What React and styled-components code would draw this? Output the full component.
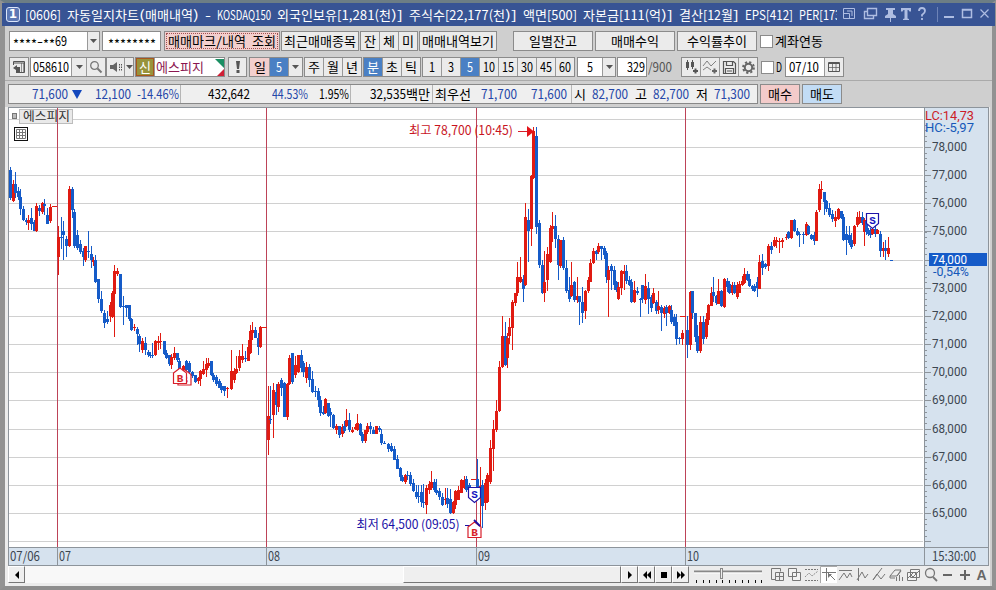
import {useLayoutEffect, useRef} from "react";
import styled, {createGlobalStyle, css} from "styled-components";

const GlobalStyle = createGlobalStyle`
     * {
          box-sizing: border-box;
     }

     body {
          margin: 0;
          overflow: hidden;
          background: #909090;
          font-family: "Liberation Sans Narrow", "Arial Narrow", "Noto Sans CJK KR", sans-serif;
          font-size: 13px;
          line-height: 18px;
          color: #000;
     }
`;

const bevel = css`
     border: 1px solid;
     border-color: #fff #777 #777 #fff;
`;

const S = {
     Window: styled.div`
          width: 996px;
          height: 590px;
          display: flex;
          flex-direction: column;
          background: #cfcfcf;
          border-style: solid;
          border-width: 3px 4px 4px 5px;
          border-color: #6d7e85 #929292 #8e8e8e #929292;
     `,

     TitleBar: styled.div`
          display: flex;
          align-items: center;
          height: 23px;
          margin: 0 -3px;
          padding-left: 4px;
          background: #385494;
          color: #fff;
          flex-shrink: 0;
     `,

     Badge: styled.div`
          width: 14px;
          height: 15px;
          border: 1px solid #dce6fa;
          border-radius: 3px;
          background: #5d78b4;
          font: bold 12px/13px "DejaVu Sans", sans-serif;
          text-align: center;
     `,

     TitleText: styled.div`
          width: 812px;
          margin-left: 5px;
          overflow: hidden;
          white-space: nowrap;
          line-height: 20px;
     `,

     Run: styled.span`
          display: inline-block;
          width: ${({$w}) => $w}px;
          white-space: pre;
          vertical-align: top;
          text-align: left;
     `,

     Glyphs: styled.span`
          display: inline-block;
          transform-origin: 0 50%;
          font-family: ${({$ko}) => ($ko ? '"Noto Sans CJK KR", sans-serif' : "inherit")};
     `,

     Row: styled.div`
          display: flex;
          align-items: center;
          height: 20px;
          margin: ${({$top}) => $top}px 0 0 ${({$left = 4}) => $left}px;
          flex-shrink: 0;
     `,

     Group: styled.div`
          display: flex;
          width: ${({$w}) => $w}px;
          height: 20px;
          margin-left: ${({$gap = 0}) => $gap}px;
          border: 1px solid #8b8b8b;
          background: #f1f1f1;
          flex-shrink: 0;

          > * + * {
               border-left: 1px solid #999;
          }
     `,

     Part: styled.div`
          display: flex;
          align-items: center;
          justify-content: ${({$align = "center"}) => $align};
          width: ${({$w}) => ($w ? `${$w}px` : "auto")};
          flex: ${({$w}) => ($w ? "none" : "1 1 0")};
          padding: 0 ${({$pad = 0}) => $pad}px;
          min-width: 0;
          background: ${({$bg = "#ebebeb"}) => $bg};
          color: ${({$color = "#000"}) => $color};
          outline: ${({$dotted}) => ($dotted ? "1px dotted #a05050" : "none")};
          outline-offset: -2px;
          white-space: nowrap;
     `,

     CreditMark: styled.div`
          display: flex;
          align-items: center;
          justify-content: center;
          width: 18px;
          background: #98933b;
          color: #fff;
          box-shadow: inset 0 0 0 1px #a8561c;
     `,

     Corners: styled.svg`
          flex: 1;
          height: 18px;
          background: #fff;

          && {
               border-left: 0;
          }
     `,

     Check: styled.div`
          width: 13px;
          height: 13px;
          margin: 0 2px 0 3px;
          border: 1px solid #8b8b8b;
          background: #fff;
     `,

     Rule: styled.div`
          height: 1px;
          margin-top: 3px;
          background: #aaa;
          flex-shrink: 0;
     `,

     Quote: styled.div`
          display: flex;
          align-items: center;
          width: 750px;
          height: 20px;
          border: 1px solid #888;
          background: #efefef;
     `,

     Value: styled.span`
          margin-left: ${({$gap}) => $gap}px;
          color: ${({$up}) => ($up ? "#2446a8" : "#000")};
          white-space: nowrap;
     `,

     Divider: styled.i`
          width: 1px;
          height: 18px;
          margin-left: ${({$gap}) => $gap}px;
          background: #b5b5b5;
     `,

     Body: styled.div`
          display: flex;
          flex-direction: column;
          width: 985px;
          height: 479px;
          margin-top: 3px;
          padding-left: 3px;
          background: #ececec;
     `,

     Chart: styled.svg`
          display: block;
          width: 981px;
          height: 440px;
          flex-shrink: 0;
     `,

     TimeAxis: styled.div`
          display: grid;
          grid-template-columns: 49px 209px 210px 209px 239px 65px;
          width: 981px;
          height: 19px;
          border: 1px solid #8d949b;
          border-width: 1px 1px 1px 0;
          background: #d6e2ee;
          color: #3c4650;
          line-height: 16px;
     `,

     Tick: styled.div`
          border-left: 1px solid #8d949b;
          padding-left: ${({$pad = 1}) => $pad}px;
     `,

     Footer: styled.div`
          display: flex;
          height: 17px;
          width: 985px;
     `,

     ScrollButton: styled.div`
          ${bevel}
          display: flex;
          align-items: center;
          justify-content: center;
          width: 17px;
          height: 17px;
          background: #efefef;
     `,

     Track: styled.div`
          width: 378px;
          background: #f8f8f8;
     `,

     Thumb: styled.div`
          ${bevel}
          width: 218px;
          background: #efefef;
     `,

     Tools: styled.svg`
          width: 300px;
          height: 18px;
          margin-left: 1px;
     `,
};

const KOREAN = /[\uac00-\ud7a3]/;

// scales a run of glyphs so that it fills its character cells
const Run = ({text, w}) => {
     const ref = useRef(null);

     useLayoutEffect(() => {
          const el = ref.current;
          const natural = parseFloat(getComputedStyle(el).width);
          // asterisks sit at mid height in masked fields
          const drop = text[0] === "*" ? 3 : 0;
          el.style.transform = `translateY(${drop}px) scaleX(${w / natural})`;
     }, [text, w]);

     return (
          <S.Run $w={w}>
               <S.Glyphs ref={ref} $ko={KOREAN.test(text)}>{text}</S.Glyphs>
          </S.Run>
     );
};

// fixed cells: 12px for hangul, 6px for everything else
const T = ({children}) => {
     const runs = String(children).match(/[\uac00-\ud7a3]+|\s+|\*+|[^\uac00-\ud7a3\s*]+/g);
     return (
          <span>
               {runs.map((run, i) => (
                    <Run key={i} text={run} w={run.length * (KOREAN.test(run) ? 12 : 6)} />
               ))}
          </span>
     );
};

const Button = ({w, gap, bg, dotted, children}) => (
     <S.Group $w={w} $gap={gap}>
          <S.Part $bg={bg} $dotted={dotted}><T>{children}</T></S.Part>
     </S.Group>
);

const Buttons = ({w, gap, items, active}) => (
     <S.Group $w={w} $gap={gap}>
          {items.map((item) => (
               <S.Part
                    key={item}
                    $bg={item === active ? "#4a80c4" : undefined}
                    $color={item === active ? "#fff" : undefined}
               >
                    <T>{item}</T>
               </S.Part>
          ))}
     </S.Group>
);

const Arrow = () => (
     <svg width="7" height="4"><path d="M0 0h7L3.5 4z" fill="#555" /></svg>
);

const TITLE =
     "[0606] 자동일지차트(매매내역) - KOSDAQ150 외국인보유[1,281(천)] 주식수[22,177(천)] 액면[500] 자본금[111(억)] 결산[12월] EPS[412] PER[173";

const TitleIcons = () => (
     <svg width="154" height="23" fill="none" stroke="#aebde2">
          <path d="M6.500 5.500h11v10h-11zM6.500 10.500h6v5M10 8h5v5" />
          <path d="M30.500 5.500h9v7h-9zM30 8.500h-2.500v7h9v-3" strokeWidth="1.400" />
          <path d="M49 5h9v2h-2v4l3 2v2H48v-2l3-2V7h-2zM53 15h1v4h-1z" fill="#aebde2" stroke="none" />
          <path d="M64 5h10v3.500h-1.500l-1-1.500H70.500v8.500l1.500 .5V17h-6v-1l1.500-.5V7h-1l-1 1.500H64z" fill="#aebde2" stroke="none" />
          <path d="M82 8q0-3 3-3t3 3q0 2-3 4v1.500M85 15v2" strokeWidth="1.800" />
          <path d="M100.500 4v15" stroke="#6d83b7" />
          <path d="M107 14h10" strokeWidth="2" />
          <path d="M125.500 6.500h9v8h-9zM125 7h10" strokeWidth="1.500" />
          <path d="M143.500 6.500l8 8M151.500 6.500l-8 8" strokeWidth="1.200" />
     </svg>
);

const Title = () => (
     <S.TitleBar>
          <S.Badge>1</S.Badge>
          <S.TitleText><T>{TITLE}</T></S.TitleText>
          <TitleIcons />
     </S.TitleBar>
);

const AccountRow = () => (
     <S.Row $top={5}>
          <S.Group $w={91}>
               <S.Part $w={77} $bg="#fff" $align="flex-start" $pad={3}><T>****-**69</T></S.Part>
               <S.Part><Arrow /></S.Part>
          </S.Group>
          <S.Group $w={59} $gap={2}>
               <S.Part $bg="#fff"><T>********</T></S.Part>
          </S.Group>
          <Button w={116} gap={3} bg="#f3cfcd" dotted>매매마크/내역 조회</Button>
          <Button w={78} gap={1}>최근매매종목</Button>
          <Buttons w={58} gap={1} items={["잔", "체", "미"]} />
          <Button w={78} gap={1}>매매내역보기</Button>
          <Button w={80} gap={16}>일별잔고</Button>
          <Button w={80} gap={2}>매매수익</Button>
          <Button w={80} gap={2}>수익률추이</Button>
          <S.Check />
          <T>계좌연동</T>
     </S.Row>
);

const PanelIcon = () => (
     <svg width="14" height="14" fill="none" stroke="#555">
          <path d="M1.500 5V1.500h11v11h-5M1 3h12" />
          <path d="M9.500 3v9M11.500 3v9" strokeWidth=".6" />
          <path d="M1 8l4-3v2h3v6H4v-3z" fill="#555" stroke="none" />
     </svg>
);

const SearchIcon = () => (
     <svg width="14" height="14" fill="none" stroke="#777">
          <circle cx="5.500" cy="5.500" r="3.800" strokeWidth="1.300" />
          <path d="M8.500 8.500l4 4" strokeWidth="2" />
     </svg>
);

const SpeakerIcon = () => (
     <svg width="14" height="12">
          <path d="M1 4h3l4-3v10L4 8H1z" fill="#666" />
          <path d="M10.500 3v7M12.500 3v7" stroke="#555" strokeDasharray="1.500 1" />
     </svg>
);

const CandleIcon = () => (
     <svg width="17" height="16" fill="none" stroke="#555">
          <path d="M4.500 1v10M9.500 1v9" />
          <path d="M3 3h3v6H3zM8 3h3v5H8z" fill="#555" stroke="none" />
          <path d="M10 12h5M12.500 9.500v5" strokeWidth="2" />
     </svg>
);

const LinePlusIcon = () => (
     <svg width="17" height="16" fill="none" stroke="#666">
          <path d="M1 7l4-5 4 5 5-5M1 11l4-3 4 3" strokeWidth=".8" />
          <path d="M10 12h5M12.500 9.500v5" strokeWidth="2" />
     </svg>
);

const SaveIcon = () => (
     <svg width="15" height="15" fill="none" stroke="#555">
          <path d="M1.500 1.500h10l2 2v10h-12zM4.500 1.500v4h6v-4M3.500 13V8.500h8V13M5 11h5" strokeWidth="1.200" />
     </svg>
);

const GearIcon = () => (
     <svg width="15" height="15" fill="none" stroke="#666">
          <circle cx="7.500" cy="7.500" r="3.700" strokeWidth="2" />
          <circle cx="7.500" cy="7.500" r="5.400" strokeWidth="2" strokeDasharray="2.200 2.040" />
     </svg>
);

const CalendarIcon = () => (
     <svg width="12" height="12" fill="none" stroke="#555">
          <path d="M.5 1.500h11v9H.5zM0 2.500h12" />
          <path d="M4.500 3v8M8 3v8M1 6.500h10" strokeWidth=".7" />
     </svg>
);

const PeriodRow = () => (
     <S.Row $top={6}>
          <S.Group $w={20}><S.Part><PanelIcon /></S.Part></S.Group>
          <S.Group $w={76} $gap={1}>
               <S.Part $w={40} $bg="#fff"><T>058610</T></S.Part>
               <S.Part $w={15}><Arrow /></S.Part>
               <S.Part><SearchIcon /></S.Part>
          </S.Group>
          <S.Group $w={28}>
               <S.Part $w={17}><SpeakerIcon /></S.Part>
               <S.Part><Arrow /></S.Part>
          </S.Group>
          <S.Group $w={90} $gap={1}>
               <S.CreditMark><T>신</T></S.CreditMark>
               <S.Part $w={60} $bg="#fff" $color="#8b1650" $align="flex-start" $pad={1}><T>에스피지</T></S.Part>
               <S.Corners viewBox="0 0 10 18" preserveAspectRatio="xMaxYMid">
                    <path d="M1 1h9v9z" fill="#1b8f63" />
                    <path d="M10 11v7H3z" fill="#d01f35" />
               </S.Corners>
          </S.Group>
          <S.Group $w={19} $gap={3}>
               <S.Part>
                    <svg width="4" height="12"><path d="M0 0h4l-1 8H1zM.5 9h3v3h-3z" fill="#555" /></svg>
               </S.Part>
          </S.Group>
          <S.Group $w={54} $gap={2}>
               <S.Part $w={19} $bg="#f3cfcd"><T>일</T></S.Part>
               <S.Part $w={19} $bg="#4a80c4" $color="#fff"><T>5</T></S.Part>
               <S.Part><Arrow /></S.Part>
          </S.Group>
          <Buttons w={58} gap={1} items={["주", "월", "년"]} />
          <Buttons w={58} gap={1} items={["분", "초", "틱"]} active="분" />
          <Buttons w={153} gap={1} items={["1", "3", "5", "10", "15", "30", "45", "60"]} active="5" />
          <S.Group $w={39} $gap={2}>
               <S.Part $w={24} $bg="#fff"><T>5</T></S.Part>
               <S.Part><Arrow /></S.Part>
          </S.Group>
          <S.Group $w={30} $gap={1}>
               <S.Part $bg="#fff" $align="flex-end" $pad={1}><T>329</T></S.Part>
          </S.Group>
          <S.Part $w={34} $bg="none" $color="#555" $align="flex-start" $pad={1}><T>/900</T></S.Part>
          <S.Group $w={77}>
               <S.Part><CandleIcon /></S.Part>
               <S.Part><LinePlusIcon /></S.Part>
               <S.Part><SaveIcon /></S.Part>
               <S.Part><GearIcon /></S.Part>
          </S.Group>
          <S.Check />
          <T>D</T>
          <S.Group $w={59} $gap={3}>
               <S.Part $w={38} $bg="#fff" $align="flex-start" $pad={3}><T>07/10</T></S.Part>
               <S.Part><CalendarIcon /></S.Part>
          </S.Group>
     </S.Row>
);

const QuoteRow = () => (
     <S.Row $top={3} $left={3}>
          <S.Quote>
               <S.Value $gap={23} $up><T>71,600</T></S.Value>
               <S.Value $gap={4}>
                    <svg width="10" height="9"><path d="M0 0h10L5 9z" fill="#1247bd" /></svg>
               </S.Value>
               <S.Value $gap={13} $up><T>12,100</T></S.Value>
               <S.Value $gap={6} $up><T>-14.46%</T></S.Value>
               <S.Divider $gap={1} />
               <S.Value $gap={27}><T>432,642</T></S.Value>
               <S.Value $gap={22} $up><T>44.53%</T></S.Value>
               <S.Value $gap={11}><T>1.95%</T></S.Value>
               <S.Divider $gap={1} />
               <S.Value $gap={19}><T>32,535백만</T></S.Value>
               <S.Divider $gap={2} />
               <S.Value $gap={2}><T>최우선</T></S.Value>
               <S.Value $gap={10} $up><T>71,700</T></S.Value>
               <S.Value $gap={14} $up><T>71,600</T></S.Value>
               <S.Divider $gap={4} />
               <S.Value $gap={2}><T>시</T></S.Value>
               <S.Value $gap={6} $up><T>82,700</T></S.Value>
               <S.Value $gap={7}><T>고</T></S.Value>
               <S.Value $gap={6} $up><T>82,700</T></S.Value>
               <S.Value $gap={7}><T>저</T></S.Value>
               <S.Value $gap={6} $up><T>71,300</T></S.Value>
          </S.Quote>
          <Button w={40} gap={2} bg="#f3cbca">매수</Button>
          <Button w={40} gap={2} bg="#c2dcf5">매도</Button>
     </S.Row>
);

// x, high, body top, body bottom, low, r(ise) or f(all)
const CANDLES = `
10 167 170 198 200 f|13 180 184 201 202 r|15 172 184 193 198 f|18 187 191 197 200 f|20 189 197 209 215 f|23 206 209 220 221 f|
26 218 220 222 225 f|28 215 220 223 230 r|31 208 218 224 230 f|34 220 222 231 231 f|36 203 206 231 232 r|39 205 208 211 216 f|
42 202 203 212 214 r|44 199 204 206 215 f|47 208 215 224 224 f|50 204 207 221 223 r|53 206 206 207 207 r|55 206 206 207 207 r|
58 226 237 257 275 r|61 217 237 238 249 f|63 221 231 235 260 f|66 236 239 246 257 f|69 186 189 246 247 r|72 187 189 210 218 f|
74 209 212 246 248 f|77 230 235 248 250 f|80 240 244 252 254 f|83 248 251 257 266 f|85 246 246 260 262 r|88 231 251 252 258 f|
91 246 254 260 268 f|93 257 260 262 266 r|95 255 260 282 283 f|98 279 279 299 303 f|101 291 299 311 313 f|104 310 313 323 328 f|
107 311 319 322 324 f|110 302 305 316 322 r|112 291 293 317 318 r|114 265 271 294 337 r|117 268 271 274 276 r|120 274 274 307 308 f|
123 296 306 307 325 f|126 305 305 308 317 f|129 305 305 319 321 f|131 318 319 330 331 f|134 324 327 328 331 r|137 327 329 334 345 f|
139 334 336 344 352 f|142 338 341 350 353 r|145 337 343 350 355 f|148 350 352 355 357 f|150 352 355 356 358 f|152 343 355 356 358 f|
155 340 341 355 356 r|158 336 341 343 350 r|160 333 341 342 349 r|164 341 341 354 355 f|166 350 353 358 359 f|169 355 355 364 366 f|
171 354 357 365 369 r|174 347 353 358 360 r|177 353 353 360 362 f|179 358 361 369 370 f|183 365 366 373 378 r|186 360 361 370 373 f|
189 361 363 372 374 f|192 371 372 376 378 f|195 375 375 382 383 f|198 377 378 381 384 r|200 370 371 379 386 r|203 361 369 374 375 r|
206 358 364 370 377 r|208 358 363 366 368 r|211 361 361 375 376 f|213 373 375 380 382 f|216 375 377 384 386 f|219 379 381 388 388 f|
221 383 386 390 393 f|224 386 386 391 396 f|227 387 388 389 398 r|231 350 371 389 390 r|234 368 371 380 383 r|236 356 369 373 374 r|
239 350 356 368 371 r|242 344 356 360 363 r|245 351 358 359 362 f|248 340 347 361 361 r|250 325 331 353 354 r|252 322 330 333 340 r|
255 327 330 338 338 f|258 333 338 347 355 f|260 326 327 347 348 r|263 327 327 328 328 r|265 327 327 328 328 r|268 386 416 440 455 r|
270 386 419 420 424 f|273 383 390 415 438 r|276 384 392 405 415 f|278 382 384 407 412 r|281 378 380 388 396 f|284 382 383 417 417 f|
287 383 384 417 420 r|289 355 358 384 385 r|292 353 353 382 384 f|295 356 365 375 378 r|298 355 355 372 373 r|301 350 355 368 372 f|
303 361 363 372 377 f|306 362 367 378 383 r|309 364 367 380 387 f|312 371 379 392 393 f|315 386 391 392 397 f|318 388 391 400 407 f|
320 396 400 413 416 f|323 406 412 414 415 f|325 398 399 413 414 r|328 403 403 416 417 f|330 408 412 415 427 f|333 414 415 428 429 f|
336 424 426 430 434 r|339 426 426 435 438 f|342 424 427 434 437 r|344 421 426 431 433 f|346 409 420 426 427 r|349 413 420 430 432 f|
352 427 430 432 433 r|355 424 427 429 430 r|357 414 423 430 431 r|360 423 424 435 436 f|362 432 434 441 443 f|365 430 430 441 443 r|
367 423 426 432 434 r|370 422 426 429 434 f|373 427 430 434 434 f|376 426 426 434 434 r|379 426 428 430 432 f|381 429 434 443 445 f|
384 441 443 444 444 f|388 443 444 449 452 f|391 443 446 451 452 f|394 446 449 460 460 f|397 455 459 469 469 f|400 467 468 477 481 f|
402 475 477 481 482 f|405 474 475 482 484 r|407 471 475 476 480 f|410 472 475 484 486 f|413 479 483 491 492 f|416 485 492 497 499 f|
418 485 496 497 503 f|421 485 492 502 507 f|423 484 502 503 508 f|426 485 488 505 514 r|429 481 484 490 494 r|431 471 482 488 490 r|
434 479 482 490 492 f|436 479 490 493 495 f|439 488 491 497 500 f|442 493 497 505 506 f|445 488 499 500 505 r|447 488 498 504 508 f|
450 489 499 513 514 f|453 501 502 513 514 r|455 490 491 505 509 r|458 486 490 500 500 r|461 479 480 493 493 r|464 476 480 488 489 r|
466 476 479 490 492 f|469 483 485 491 492 f|472 479 479 480 480 r|474 479 479 480 480 r|477 459 479 490 500 f|480 467 486 490 527 r|
482 480 485 506 528 f|485 479 483 503 510 r|487 473 475 502 503 r|490 440 448 482 484 r|493 420 429 449 471 r|496 400 411 430 432 r|
499 361 367 411 412 r|502 316 336 367 368 r|505 322 336 365 366 f|507 333 338 358 368 r|509 318 327 336 344 r|512 300 302 328 350 r|
515 293 293 303 306 r|517 262 277 293 296 r|520 257 277 282 283 r|523 275 279 289 302 f|525 203 217 285 286 r|528 209 220 231 262 f|
531 175 176 229 246 r|533 127 131 178 179 r|536 127 136 227 234 f|539 220 223 265 268 f|542 260 265 293 294 f|544 251 282 293 302 r|
547 247 254 280 291 r|550 225 228 262 263 r|552 212 226 229 242 r|555 215 226 239 248 f|558 235 239 265 280 f|560 240 240 266 268 r|
563 237 240 268 270 f|566 260 268 291 293 f|569 277 290 299 302 f|571 262 285 296 297 r|574 281 282 300 302 f|577 277 296 300 303 r|
579 296 296 302 325 f|582 287 302 313 323 f|585 290 291 311 319 r|588 277 280 291 293 r|590 259 263 282 282 r|593 248 251 263 264 r|
596 250 251 254 260 f|598 243 246 252 254 r|601 246 246 249 260 f|604 246 248 255 259 f|606 251 253 277 283 f|608 266 270 280 317 r|
611 264 266 271 290 f|614 266 270 285 290 f|616 281 282 290 292 f|618 282 287 299 300 r|621 270 271 288 295 r|624 265 271 274 290 r|
626 265 271 281 284 f|629 276 280 285 286 f|631 279 282 302 303 f|634 281 290 302 303 r|637 287 291 293 295 f|640 298 299 300 317 f|
642 285 285 299 303 f|645 274 286 300 304 r|648 282 288 299 314 f|651 295 297 308 312 f|653 288 293 303 304 r|656 300 302 311 314 f|
658 291 306 310 314 r|661 305 307 313 331 f|664 306 308 314 318 r|666 305 307 313 326 f|669 305 306 313 314 r|671 305 310 322 324 f|
674 314 317 326 326 f|676 314 322 339 345 f|679 337 338 339 344 f|682 330 333 339 345 r|681 316 316 317 317 r|684 316 316 317 317 r|
687 316 330 345 358 f|690 291 292 345 350 r|692 291 291 313 319 f|695 313 313 337 342 f|697 325 336 351 353 f|700 316 322 351 353 r|
703 316 322 339 344 f|706 313 319 337 339 r|708 304 305 320 325 r|711 287 293 306 306 r|713 277 292 296 302 f|716 295 296 303 305 f|
718 279 291 304 304 r|721 290 291 306 307 f|724 278 279 307 308 r|727 278 281 287 292 f|729 281 284 293 294 f|732 282 285 293 295 r|
734 282 285 293 294 f|737 282 285 297 299 r|739 281 284 293 293 r|742 276 281 285 286 r|744 268 274 283 284 r|747 271 274 280 281 f|
749 274 279 286 287 f|752 285 286 289 291 f|754 284 286 291 292 f|757 277 282 288 297 f|759 255 262 289 289 r|762 254 261 268 275 f|
765 263 264 267 269 f|768 244 246 266 271 r|771 242 246 250 254 f|774 237 240 246 247 r|776 237 240 242 248 r|779 238 241 242 253 r|
782 238 240 242 248 r|786 234 237 238 240 r|788 231 232 238 239 f|791 220 220 238 239 r|794 219 220 231 232 f|797 228 231 235 236 f|
799 232 234 235 247 f|803 232 234 235 244 f|806 222 224 235 236 r|808 225 226 234 235 f|811 234 235 239 240 f|814 232 235 241 245 f|
816 210 212 241 241 r|819 184 189 210 212 r|821 181 189 190 199 r|824 192 192 202 215 f|826 200 201 209 212 f|829 203 208 215 217 f|
832 210 214 219 222 f|835 211 217 221 227 r|838 208 209 219 220 r|841 211 211 218 219 f|843 214 217 240 241 f|846 226 234 240 255 f|
849 226 235 243 245 f|851 233 240 247 249 f|854 225 226 244 246 r|857 212 217 225 227 r|859 211 217 223 224 r|862 212 217 223 225 f|
864 218 220 232 246 r|866 220 221 232 235 f|868 228 230 234 236 f|870 228 230 235 238 f|872 226 229 234 235 r|875 225 229 234 237 f|
877 229 230 234 234 r|880 231 234 251 257 f|883 242 248 251 257 r|885 240 248 251 260 f|888 237 248 254 257 r|891 260 260 261 261 f`
     .split("|")
     .map((line) => {
          const [x, high, top, bottom, low, dir] = line.trim().split(" ");
          return {x: +x, high: +high, top: +top, bottom: +bottom, low: +low, rise: dir === "r"};
     });

const DAY_LINES = [57.5, 266.5, 476.5, 685.5];
const priceY = (price) => Math.round(147 + ((78000 - price) / 1000) * 28.16);
const GRID = Array.from({length: 16}, (_, i) => 79000 - i * 1000);
const MINOR = Array.from({length: 75}, (_, i) => 124.5 + i * 5.632);

const comma = (price) => price.toLocaleString("en-US");

const ChartLabel = ({x, y, w, fill = "#3c4650", font, children}) => (
     <text x={x} y={y} fill={fill} fontSize="12.5" fontFamily={font} textLength={w} lengthAdjust="spacingAndGlyphs">
          {children}
     </text>
);

const AxisLabel = (props) => <ChartLabel font="Roboto, sans-serif" {...props} />;

const BuyMark = ({x, y}) => (
     <g>
          <path d={`M${x} ${y + 5.5}l6.500 -5 6.500 5v10.500h-13z`} fill="#fff" stroke="#d81f2b" strokeWidth="1.200" />
          <text x={x + 6.5} y={y + 14} textAnchor="middle" fontSize="11" fontWeight="bold" fontFamily="Liberation Mono" fill="#d81f2b">B</text>
     </g>
);

const SellMark = ({x, y}) => (
     <g>
          <path d={`M${x} ${y}h12v10l-6 5 -6 -5z`} fill="#fff" stroke="#2014a8" strokeWidth="1.200" />
          <text x={x + 6} y={y + 10} textAnchor="middle" fontSize="11" fontWeight="bold" fontFamily="Liberation Mono" fill="#1414c0">S</text>
     </g>
);

const PriceChart = () => (
     <S.Chart viewBox="8 107 981 440">
          <rect x="8" y="107" width="981" height="440" fill="#fff" />
          <rect x="924" y="107" width="65" height="440" fill="#d6e2ee" />
          {GRID.map((price) => (
               <path key={price} d={`M9 ${priceY(price) + 0.5}H923`} stroke="#d0d0d0" />
          ))}
          <path d="M8 107.500H989M8.500 107V547M988.500 107V547M924.500 107V547" stroke="#8d949b" />
          {MINOR.map((y) => (
               <path key={y} d={`M925 ${Math.round(y) + 0.5}h2`} stroke="#8d949b" />
          ))}
          {GRID.slice(1).map((price) => (
               <path key={price} d={`M925 ${priceY(price) + 0.5}h6`} stroke="#8d949b" />
          ))}

          <rect x="19.500" y="109.500" width="53" height="14" fill="#e9e9e9" stroke="#bdbdbd" />
          <ChartLabel x={23} y={121} w={47} fill="#333">에스피지</ChartLabel>
          <rect x="12.500" y="113.500" width="4" height="5" fill="#bbb" stroke="#777" />
          <rect x="14.500" y="127.500" width="13" height="13" fill="#fff" stroke="#111" />
          <path d="M16.500 129.500h9v9h-9zM19.500 130v9M22.500 130v9M17 132.500h9M17 135.500h9" fill="none" stroke="#777" />

          {DAY_LINES.map((x) => (
               <path key={x} d={`M${x} 108V547`} stroke="#bd4358" />
          ))}
          {CANDLES.map(({x, high, top, bottom, low, rise}, i) => (
               <g key={i} fill={rise ? "#e01b12" : "#155bc8"} shapeRendering="crispEdges">
                    <rect x={x} y={high} width="1" height={Math.max(1, low - high)} />
                    <rect x={x - 1} y={top} width="3" height={Math.max(1, bottom - top)} />
               </g>
          ))}

          <ChartLabel x={409} y={135} w={104} fill="#c8141e">최고 78,700 (10:45)</ChartLabel>
          <path d="M518 131.500h10" stroke="#d81f2b" />
          <path d="M527 126l7 5.500 -7 5.500z" fill="#e3141a" />
          <ChartLabel x={356.5} y={529} w={103} fill="#1a0fa5">최저 64,500 (09:05)</ChartLabel>
          <path d="M465 525.500h7" stroke="#1a0fa5" />
          <BuyMark x={178} y={369} />
          <BuyMark x={173.5} y={367.5} />
          <SellMark x={468.5} y={487.5} />
          <BuyMark x={468} y={521.5} />
          <path d="M474 520l6 6" stroke="#1a0fa5" strokeWidth="1.800" />
          <SellMark x={866.5} y={213.5} />

          <AxisLabel x={925} y={120} w={49} fill="#cc1d28">LC:14,73</AxisLabel>
          <AxisLabel x={925} y={132} w={49} fill="#1558b8">HC:-5,97</AxisLabel>
          <rect x="929" y="253" width="58" height="13" fill="#155bc8" />
          {GRID.slice(1, 15).map((price) => (
               <AxisLabel key={price} x={932} y={priceY(price) + 4} w={35} fill={price === 74000 ? "#fff" : "#3c4650"}>
                    {comma(price)}
               </AxisLabel>
          ))}
          <AxisLabel x={933} y={276} w={36} fill="#1558b8">-0,54%</AxisLabel>
     </S.Chart>
);

const PLAYBACK = ["M3 1l4 4 -4 4z", "M5 1v8l-4 -4zM9 1v8l-4 -4z", "M2 2h6v6h-6z", "M1 1l4 4 -4 4zM5 1l4 4 -4 4z"];

const FooterTools = () => (
     <S.Tools viewBox="690 566 300 18" fill="none" stroke="#777">
          <path d="M694 571.500h68" stroke="#888" strokeWidth="2" />
          <path d="M694 573h68" stroke="#fff" />
          <rect x="720.500" y="568.500" width="2" height="10" fill="#eee" stroke="#888" />
          {Array.from({length: 11}, (_, i) => (
               <path key={i} d={`M${Math.round(696 + i * 6.5) + 0.5} 580v3`} stroke="#111" />
          ))}
          <path d="M776 579.500h-4.500v-11h9v3M775.500 572.500h8v8h-8zM779.500 573v8M776 576.500h8" />
          <path d="M788.500 568.500h8v8h-8zM792.500 572.500h8v8h-8z" fill="#f3f3f3" />
          <path d="M805 569.500h13M805 580.500h13" strokeDasharray="2 1" />
          <path d="M805 577l4-4 3 3 6-5" strokeWidth=".8" strokeDasharray="2 1" />
          <path d="M820 566h17v17h-17z" fill="#fff" stroke="none" />
          <path d="M820.500 583v-16.500H837" stroke="#aaa" />
          <path d="M822 572.500h14M826.500 568v13M828 573l7 7" />
          <path d="M828 574h4l-4 4z" fill="#777" stroke="none" />
          <path d="M839 570.500h13M839 580l5-7 3 5 3-5 2 4" />
          <path d="M858.500 568v13M857 580l5-8 3 6 3-4" />
          <path d="M873 580l9-12M873 580l4-6 4 5 4-5" />
          <path d="M890 576l5-6h6l-4 6zM890 576v2h5M897 576l4-5M896.500 577v4M899.500 575v6M902.500 577v4" />
          <path d="M910.500 569.500h9v8h-9zM907.500 572.500h9v8h-9z" fill="#f3f3f3" />
          <path d="M908 578l3-3 2 2 3-3M911 575l3-3 2 2 3-3" />
          <circle cx="930" cy="573" r="4.500" strokeWidth="1.300" />
          <path d="M933 577l4 4" strokeWidth="1.800" />
          <path d="M943 575h9M960 575h10M965 570v10" stroke="#666" strokeWidth="2" />
          <text x="976.500" y="580" fill="#666" stroke="none" fontSize="14" fontWeight="bold" fontFamily="Liberation Sans">A</text>
     </S.Tools>
);

const Footer = () => (
     <S.Footer>
          <S.ScrollButton>
               <svg width="6" height="8"><path d="M5 0v8l-4 -4z" fill="#000" /></svg>
          </S.ScrollButton>
          <S.Track />
          <S.Thumb />
          {PLAYBACK.map((d) => (
               <S.ScrollButton key={d}>
                    <svg width="10" height="10"><path d={d} fill="#000" /></svg>
               </S.ScrollButton>
          ))}
          <FooterTools />
     </S.Footer>
);

const App = () => (
     <>
          <GlobalStyle />
          <S.Window>
               <Title />
               <AccountRow />
               <PeriodRow />
               <S.Rule />
               <QuoteRow />
               <S.Body>
                    <PriceChart />
                    <S.TimeAxis>
                         <S.Tick><T>07/06</T></S.Tick>
                         <S.Tick><T>07</T></S.Tick>
                         <S.Tick><T>08</T></S.Tick>
                         <S.Tick><T>09</T></S.Tick>
                         <S.Tick><T>10</T></S.Tick>
                         <S.Tick $pad={7}><Run text="15:30:00" w={44} /></S.Tick>
                    </S.TimeAxis>
                    <Footer />
               </S.Body>
          </S.Window>
     </>
);

export default App;
